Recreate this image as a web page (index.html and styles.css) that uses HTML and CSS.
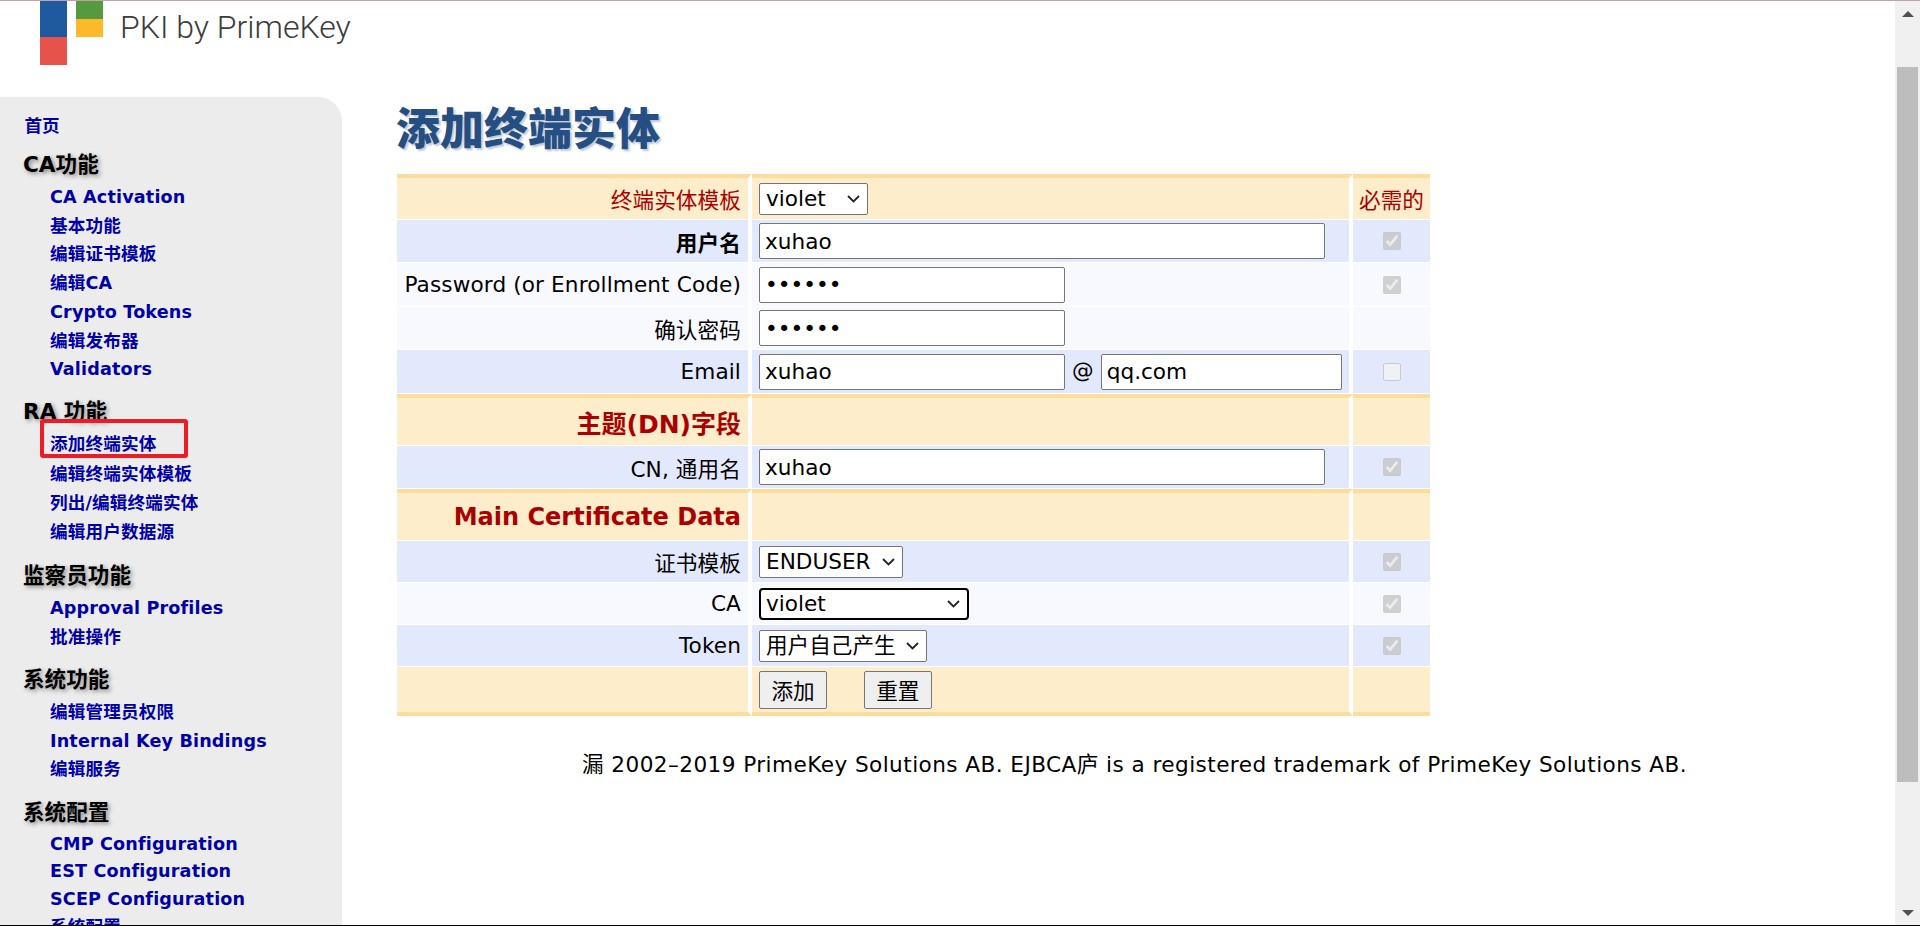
FILE: index.html
```html
<!DOCTYPE html>
<html lang="zh">

<head>
    <meta charset="UTF-8">
    <title>添加终端实体</title>
    <link rel="stylesheet" href="styles.css">
</head>

<body>
    <div class="frame">
        <div class="viewport">
            <header class="banner">
                <svg class="logo" width="64" height="66" viewBox="0 0 64 66">
                    <rect x="0" y="0" width="27" height="36" fill="#1f5a9e"></rect>
                    <rect x="0" y="36" width="27" height="28" fill="#e5534b"></rect>
                    <rect x="36" y="0" width="27" height="18" fill="#559a3c"></rect>
                    <rect x="36" y="18" width="27" height="18" fill="#fdb92c"></rect>
                </svg>
                <span class="brand">PKI by PrimeKey</span>
            </header>

            <div class="columns">
                <nav class="sidebar">
                    <div class="callout"></div>
                    <a class="home" href="#">首页</a>

                    <h3>CA功能</h3>
                    <ul>
                        <li><a href="#">CA Activation</a></li>
                        <li><a href="#">基本功能</a></li>
                        <li><a href="#">编辑证书模板</a></li>
                        <li><a href="#">编辑CA</a></li>
                        <li><a href="#">Crypto Tokens</a></li>
                        <li><a href="#">编辑发布器</a></li>
                        <li><a href="#">Validators</a></li>
                    </ul>

                    <h3>RA 功能</h3>
                    <ul class="tall">
                        <li><a href="#">添加终端实体</a></li>
                        <li><a href="#">编辑终端实体模板</a></li>
                        <li><a href="#">列出/编辑终端实体</a></li>
                        <li><a href="#">编辑用户数据源</a></li>
                    </ul>

                    <h3>监察员功能</h3>
                    <ul>
                        <li><a href="#">Approval Profiles</a></li>
                        <li><a href="#">批准操作</a></li>
                    </ul>

                    <h3>系统功能</h3>
                    <ul>
                        <li><a href="#">编辑管理员权限</a></li>
                        <li><a href="#">Internal Key Bindings</a></li>
                        <li><a href="#">编辑服务</a></li>
                    </ul>

                    <h3>系统配置</h3>
                    <ul class="short">
                        <li><a href="#">CMP Configuration</a></li>
                        <li><a href="#">EST Configuration</a></li>
                        <li><a href="#">SCEP Configuration</a></li>
                        <li><a href="#">系统配置</a></li>
                    </ul>
                </nav>

                <main class="content">
                    <h1>添加终端实体</h1>

                    <table class="entity-form">
                        <tr class="row-head h-46">
                            <td class="label title-label">终端实体模板</td>
                            <td>
                                <select class="sel-profile">
                                    <option>violet</option>
                                </select>
                            </td>
                            <td class="req title-label">必需的</td>
                        </tr>
                        <tr class="row-blue h-43">
                            <td class="label"><b>用户名</b></td>
                            <td><input class="in-long" type="text" value="xuhao"></td>
                            <td class="req"><input type="checkbox" checked disabled></td>
                        </tr>
                        <tr class="row-pale h-44">
                            <td class="label">Password (or Enrollment Code)</td>
                            <td><input class="in-short" type="password" value="xuhao1"></td>
                            <td class="req"><input type="checkbox" checked disabled></td>
                        </tr>
                        <tr class="row-pale h-43">
                            <td class="label">确认密码</td>
                            <td><input class="in-short" type="password" value="xuhao1"></td>
                            <td class="req"></td>
                        </tr>
                        <tr class="row-blue h-44">
                            <td class="label">Email</td>
                            <td>
                                <input class="in-short" type="text" value="xuhao">
                                <span class="at">@</span>
                                <input class="in-domain" type="text" value="qq.com">
                            </td>
                            <td class="req"><input type="checkbox" disabled></td>
                        </tr>
                        <tr class="row-head h-52">
                            <td class="label section-label dn-label">主题(DN)字段</td>
                            <td></td>
                            <td></td>
                        </tr>
                        <tr class="row-blue h-43">
                            <td class="label">CN, 通用名</td>
                            <td><input class="in-long" type="text" value="xuhao"></td>
                            <td class="req"><input type="checkbox" checked disabled></td>
                        </tr>
                        <tr class="row-head h-52">
                            <td class="label section-label">Main Certificate Data</td>
                            <td></td>
                            <td></td>
                        </tr>
                        <tr class="row-blue h-42">
                            <td class="label">证书模板</td>
                            <td>
                                <select class="sel-cert">
                                    <option>ENDUSER</option>
                                </select>
                            </td>
                            <td class="req"><input type="checkbox" checked disabled></td>
                        </tr>
                        <tr class="row-pale h-42">
                            <td class="label">CA</td>
                            <td>
                                <select class="sel-ca">
                                    <option>violet</option>
                                </select>
                            </td>
                            <td class="req"><input type="checkbox" checked disabled></td>
                        </tr>
                        <tr class="row-blue h-42">
                            <td class="label">Token</td>
                            <td>
                                <select class="sel-token">
                                    <option>用户自己产生</option>
                                </select>
                            </td>
                            <td class="req"><input type="checkbox" checked disabled></td>
                        </tr>
                        <tr class="row-foot h-49">
                            <td></td>
                            <td>
                                <button type="button">添加</button>
                                <button class="btn-reset" type="button">重置</button>
                            </td>
                            <td></td>
                        </tr>
                    </table>

                    <p class="copyright">漏 2002–2019 PrimeKey Solutions AB. EJBCA庐 is a registered trademark of PrimeKey Solutions AB.</p>
                </main>
            </div>
        </div>

        <div class="scrollbar">
            <div class="arrow-up"></div>
            <div class="thumb"></div>
            <div class="arrow-down"></div>
        </div>
    </div>
</body>

</html>
```

FILE: styles.css
```css
* {
    box-sizing: border-box;
}

html,
body {
    margin: 0;
    padding: 0;
    height: 100%;
    overflow: hidden;
}

body {
    background-color: white;
    color: black;
    font-family: "DejaVu Sans", "Noto Sans CJK SC", sans-serif;
    font-size: 21.6px;
}

.frame {
    display: flex;
    height: 926px;
    border-top: 1px solid #c0a2aa;
    border-bottom: 1px solid black;
}

.viewport {
    flex: 1;
    min-width: 0;
    display: flex;
    flex-direction: column;
}

/* banner */
.banner {
    display: flex;
    align-items: flex-start;
    height: 96px;
    padding-left: 40px;
}

.logo {
    flex: none;
}

.brand {
    margin-left: 16px;
    font-family: "Roboto", sans-serif;
    font-weight: 300;
    font-size: 32px;
    line-height: 52px;
    color: #3c3c3c;
}

.columns {
    flex: 1;
    min-height: 0;
    display: flex;
}

/* left menu */
.sidebar {
    position: relative;
    flex: none;
    width: 342px;
    overflow: hidden;
    padding: 14.5px 0 0 23px;
    background-color: #ececec;
    border-top-right-radius: 24px;
    font-size: 17.6px;
    font-weight: bold;
}

.sidebar a {
    color: #0000aa;
    text-decoration: none;
}

.home {
    display: block;
    margin: 0 0 6.5px 1.5px;
    line-height: 29px;
}

.sidebar h3 {
    margin: 0;
    font-size: 21.6px;
    line-height: 36px;
    text-shadow: 2px 2px 4px #888;
}

.sidebar ul {
    list-style: none;
    margin: 0 0 10.5px;
    padding: 0 0 0 27px;
}

.sidebar li {
    line-height: 28.7px;
    letter-spacing: 0.15px;
}

.sidebar .tall li {
    line-height: 29.3px;
}

.sidebar .short li {
    line-height: 27.7px;
}

.callout {
    position: absolute;
    left: 40px;
    top: 322px;
    width: 148px;
    height: 39px;
    border: 4px solid #ed1c24;
    border-radius: 3px;
}

/* main form */
.content {
    flex: 1;
    min-width: 0;
    padding: 0 0 0 55px;
}

h1 {
    margin: 0 0 0 -1px;
    height: 77px;
    color: #254e82;
    font-size: 44px;
    font-weight: 900;
    line-height: 66px;
    text-shadow: 2px 2px 2px #c0c8d4;
}

.entity-form {
    width: 1033px;
    border-collapse: separate;
    border-spacing: 0;
    table-layout: fixed;
}

.entity-form td {
    padding: 0;
    border-bottom: 1px solid white;
    border-right: 4px solid white;
    vertical-align: middle;
}

.entity-form td:first-child {
    width: 355px;
}

.entity-form td:last-child {
    width: 77px;
    border-right: none;
}

.entity-form td:nth-child(2) {
    padding-left: 7px;
}

.h-42 { height: 42px; }
.h-43 { height: 43px; }
.h-44 { height: 44px; }
.h-46 { height: 46px; }
.h-49 { height: 49px; }
.h-52 { height: 52px; }

.row-blue td {
    background-color: #e3e9fc;
}

.row-pale td {
    background-color: #f8f9fe;
}

.row-head td,
.row-foot td {
    background-color: #feedca;
}

.row-head td {
    border-top: 4px solid #fedc9c;
}

.row-foot td {
    border-bottom: 4px solid #fedc9c;
}

.label {
    text-align: right;
    padding-right: 7px !important;
    letter-spacing: 0.12px;
}

.title-label {
    color: #aa0000;
}

.section-label {
    color: #aa0000;
    font-size: 24px;
    font-weight: bold;
    letter-spacing: 0;
}

.dn-label {
    font-size: 25px;
}

.req {
    text-align: center;
}

input[type=text],
input[type=password] {
    height: 36px;
    padding: 0 5px;
    font-family: inherit;
    font-size: 21.6px;
    vertical-align: middle;
    background-color: white;
    border: 1px solid #767676;
    border-radius: 2px;
}

.in-long {
    width: 566px;
}

.in-short {
    width: 306px;
}

.in-domain {
    width: 241px;
}

.at {
    margin: 0 0.2px;
}

input[type=checkbox] {
    display: block;
    width: 18px;
    height: 18px;
    margin: 0 auto;
}

select {
    appearance: none;
    height: 32px;
    padding: 0 0 0 6px;
    font-family: inherit;
    font-size: 21.6px;
    vertical-align: middle;
    background: white url("data:image/svg+xml,%3Csvg xmlns='http://www.w3.org/2000/svg' width='13' height='8'%3E%3Cpolyline points='1,1 6.5,6.5 12,1' fill='none' stroke='%23222' stroke-width='1.8'/%3E%3C/svg%3E") no-repeat right 7px center;
    border: 1px solid #767676;
    border-radius: 2px;
}

.sel-profile {
    width: 109px;
}

.sel-cert {
    width: 144px;
}

.sel-ca {
    width: 210px;
    padding-left: 5px;
    border: 2px solid black;
    border-radius: 4px;
}

.sel-token {
    width: 168px;
}

button {
    width: 68px;
    height: 38px;
    padding: 0;
    font-family: inherit;
    font-size: 21.6px;
    color: black;
    background-color: #efefef;
    border: 1px solid #767676;
    border-radius: 2px;
}

.btn-reset {
    margin-left: 30px;
}

.copyright {
    margin: 36px 0 0;
    padding-left: 185px;
    line-height: 26px;
    letter-spacing: 0.43px;
}

/* page scrollbar */
.scrollbar {
    flex: none;
    position: relative;
    width: 25px;
    background-color: #f0f0f0;
}

.thumb {
    position: absolute;
    left: 2px;
    top: 66px;
    width: 21px;
    height: 715px;
    background-color: #bdbdbd;
}

.arrow-up,
.arrow-down {
    position: absolute;
    left: 7px;
    width: 0;
    height: 0;
    border-left: 6px solid transparent;
    border-right: 6px solid transparent;
}

.arrow-up {
    top: 10px;
    border-bottom: 6px solid #505050;
}

.arrow-down {
    bottom: 9px;
    border-top: 6px solid #505050;
}
```
